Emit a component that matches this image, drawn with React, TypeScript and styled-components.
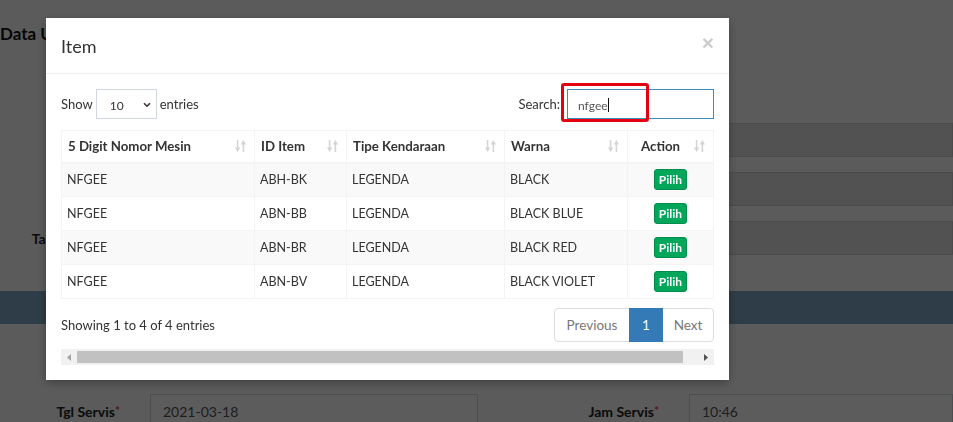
import React from "react";
import styled, { createGlobalStyle } from "styled-components";

const Global = createGlobalStyle`
  html, body { margin: 0; padding: 0; }
  body {
    font-family: Lato, "Open Sans", sans-serif;
    font-size: 13px;
    color: #333;
    overflow: hidden;
    background: #fcfcfc;
  }
  * { box-sizing: border-box; }
`;

/* ---------- background page ---------- */
const Page = styled.div`
  width: 953px;
  height: 422px;
  overflow: hidden;
  background: #fcfcfc;
  display: flex;
  flex-direction: column;
  & > * { flex-shrink: 0; }
`;

const PageTitle = styled.h1`
  margin: 24px 0 0 0;
  font-size: 17px;
  line-height: 20px;
  font-weight: 700;
  color: #111;
`;

const FormBlock = styled.div`
  margin-top: 79px;
  display: flex;
  flex-direction: column;
  gap: 15px;
`;

const FormRow = styled.div`
  display: grid;
  grid-template-columns: 150px 1fr;
  height: 34px;
  align-items: center;
`;

const FieldLabel = styled.label`
  text-align: right;
  padding-right: 30px;
  font-weight: 700;
  font-size: 14px;
  color: #222;
  white-space: nowrap;
`;

const Req = styled.span`
  color: #dd4b39;
  font-size: 12px;
  vertical-align: top;
`;

const FieldInput = styled.div<{ $light?: boolean }>`
  height: 34px;
  background: ${(p) => (p.$light ? "#ffffff" : "#e4e4e4")};
  border: 1px solid ${(p) => (p.$light ? "#d2d6de" : "#cfcfcf")};
  padding: 0 12px;
  display: flex;
  align-items: center;
  font-size: 14px;
  color: #555;
`;

const SectionBar = styled.div`
  margin-top: 36px;
  height: 33px;
  background: #80a9c5;
`;

const BottomRow = styled.div`
  margin-top: 70px;
  display: grid;
  grid-template-columns: 150px 328px 211px 1fr;
  height: 34px;
  align-items: center;
`;

/* ---------- modal ---------- */
const Backdrop = styled.div`
  position: fixed;
  inset: 0;
  background: rgba(0, 0, 0, 0.64);
`;

const Modal = styled.div`
  position: fixed;
  top: 18px;
  left: 46px;
  width: 683px;
  background: #fff;
  box-shadow: 0 3px 9px rgba(0, 0, 0, 0.3);
`;

const ModalHeader = styled.div`
  padding: 15px;
  border-bottom: 1px solid #eeeeee;
  display: flex;
  justify-content: space-between;
  align-items: center;
`;

const ModalTitle = styled.h4`
  margin: 0;
  padding-top: 1px;
  font-size: 18px;
  line-height: 24px;
  font-weight: 400;
  color: #333;
`;

const CloseBtn = styled.button`
  border: 0;
  background: transparent;
  padding: 0;
  margin-top: -6px;
  margin-right: 0;
  font-size: 21px;
  font-weight: 700;
  line-height: 1;
  color: #000;
  opacity: 0.2;
  font-family: "Liberation Sans", sans-serif;
`;

const ModalBody = styled.div`
  padding: 15px;
  display: flex;
  flex-direction: column;
`;

const ControlsRow = styled.div`
  display: flex;
  justify-content: space-between;
  align-items: center;
  height: 30px;
`;

const LengthCtl = styled.div`
  display: flex;
  align-items: center;
  gap: 3px;
  font-size: 13px;
`;

const FakeSelect = styled.div`
  width: 61px;
  height: 30px;
  border: 1px solid #d2d6de;
  display: flex;
  align-items: center;
  justify-content: space-between;
  padding: 2px 5px 0 13px;
  font-size: 12px;
  color: #333;
`;

const FilterCtl = styled.div`
  position: relative;
  display: flex;
  align-items: center;
  gap: 7px;
  font-size: 13px;
`;

const SearchBox = styled.div`
  width: 147px;
  height: 30px;
  border: 1px solid #3c8dbc;
  display: flex;
  align-items: center;
  padding: 2px 0 0 10px;
  font-size: 12px;
  color: #555;
`;

const Caret = styled.span`
  display: inline-block;
  width: 1px;
  height: 14px;
  background: #111;
`;

const Highlight = styled.div`
  position: absolute;
  right: 65px;
  top: -6px;
  width: 88px;
  height: 39px;
  border: 3px solid #e3000f;
  border-radius: 3px;
  pointer-events: none;
`;

const Table = styled.table`
  margin-top: 11px;
  width: 652px;
  border-collapse: collapse;
  table-layout: fixed;
`;

const Th = styled.th<{ $center?: boolean }>`
  position: relative;
  height: 32px;
  padding: 0 26px 0 6px;
  text-align: ${(p) => (p.$center ? "center" : "left")};
  font-weight: 700;
  font-size: 13.25px;
  color: #333;
  border: 1px solid #f4f4f4;
  border-bottom: 2px solid #f4f4f4;
  white-space: nowrap;
`;

const SortIcon = styled.svg`
  position: absolute;
  right: 8px;
  top: 50%;
  margin-top: -7px;
`;

const Tr = styled.tr<{ $odd?: boolean }>`
  background: ${(p) => (p.$odd ? "#f9f9f9" : "#fff")};
`;

const Td = styled.td<{ $center?: boolean }>`
  height: 34px;
  padding: 0 5px;
  border: 1px solid #f4f4f4;
  text-align: ${(p) => (p.$center ? "center" : "left")};
  font-size: 12.5px;
  color: #333;
  white-space: nowrap;
`;

const PilihBtn = styled.button`
  background: #00a65a;
  border: 1px solid #008d4c;
  border-radius: 3px;
  color: #fff;
  font-weight: 700;
  font-size: 12px;
  font-family: inherit;
  height: 21px;
  width: 33px;
  padding: 0;
  line-height: 19px;
  vertical-align: middle;
`;

const FooterRow = styled.div`
  margin-top: 9px;
  display: flex;
  justify-content: space-between;
  align-items: center;
  height: 34px;
`;

const Info = styled.div`
  font-size: 13px;
  color: #333;
`;

const Pager = styled.ul`
  list-style: none;
  margin: 0;
  padding: 0;
  display: flex;
`;

const PageLink = styled.li<{ $active?: boolean; $w: number; $pos?: "first" | "last" }>`
  height: 34px;
  width: ${(p) => p.$w}px;
  display: flex;
  align-items: center;
  justify-content: center;
  border: 1px solid ${(p) => (p.$active ? "#337ab7" : "#ddd")};
  background: ${(p) => (p.$active ? "#337ab7" : "#fff")};
  color: ${(p) => (p.$active ? "#fff" : "#777")};
  margin-left: ${(p) => (p.$pos === "first" ? "0" : "-1px")};
  border-radius: ${(p) =>
    p.$pos === "first" ? "4px 0 0 4px" : p.$pos === "last" ? "0 4px 4px 0" : "0"};
  font-size: 13.5px;
  position: relative;
  z-index: ${(p) => (p.$active ? 2 : 1)};
`;

const ScrollTrack = styled.div`
  margin-top: 7px;
  height: 16px;
  background: #f1f1f1;
  display: flex;
  align-items: center;
`;

const ScrollArrow = styled.div<{ $dark?: boolean }>`
  width: 16px;
  height: 16px;
  display: flex;
  align-items: center;
  justify-content: center;
  color: ${(p) => (p.$dark ? "#505050" : "#a3a3a3")};
`;

const ScrollThumb = styled.div`
  height: 12px;
  width: 606px;
  background: #c1c1c1;
`;

const ScrollSpacer = styled.div`
  flex: 1;
`;

const SortGlyph = () => (
  <SortIcon width="11" height="14" viewBox="0 0 11 14">
    <rect x="1.8" y="1" width="1.6" height="9" fill="#d4d4d4" />
    <polygon points="0,8.5 5.2,8.5 2.6,13" fill="#d4d4d4" />
    <rect x="7.6" y="4" width="1.6" height="9" fill="#d4d4d4" />
    <polygon points="5.8,5.5 11,5.5 8.4,1" fill="#d4d4d4" />
  </SortIcon>
);

const rows = [
  ["NFGEE", "ABH-BK", "LEGENDA", "BLACK"],
  ["NFGEE", "ABN-BB", "LEGENDA", "BLACK BLUE"],
  ["NFGEE", "ABN-BR", "LEGENDA", "BLACK RED"],
  ["NFGEE", "ABN-BV", "LEGENDA", "BLACK VIOLET"],
];

const cols = [193, 92, 158, 123, 86];

export default function App() {
  return (
    <>
      <Global />
      <Page>
        <PageTitle>Data U</PageTitle>
        <FormBlock>
          <FormRow>
            <FieldLabel />
            <FieldInput />
          </FormRow>
          <FormRow>
            <FieldLabel />
            <FieldInput />
          </FormRow>
          <FormRow>
            <FieldLabel>Tahun Rakitan</FieldLabel>
            <FieldInput />
          </FormRow>
        </FormBlock>
        <SectionBar />
        <BottomRow>
          <FieldLabel>
            Tgl Servis<Req>*</Req>
          </FieldLabel>
          <FieldInput $light>2021-03-18</FieldInput>
          <FieldLabel>
            Jam Servis<Req>*</Req>
          </FieldLabel>
          <FieldInput $light>10:46</FieldInput>
        </BottomRow>
      </Page>

      <Backdrop />
      <Modal>
        <ModalHeader>
          <ModalTitle>Item</ModalTitle>
          <CloseBtn>×</CloseBtn>
        </ModalHeader>
        <ModalBody>
          <ControlsRow>
            <LengthCtl>
              Show
              <FakeSelect>
                10
                <svg width="8" height="6" viewBox="0 0 8 6">
                  <path d="M1 1.2 L4 4.2 L7 1.2" fill="none" stroke="#333" strokeWidth="1.6" />
                </svg>
              </FakeSelect>
              entries
            </LengthCtl>
            <FilterCtl>
              Search:
              <SearchBox>
                nfgee
                <Caret />
              </SearchBox>
              <Highlight />
            </FilterCtl>
          </ControlsRow>

          <Table>
            <colgroup>
              {cols.map((w, i) => (
                <col key={i} style={{ width: w }} />
              ))}
            </colgroup>
            <thead>
              <tr>
                <Th>
                  5 Digit Nomor Mesin
                  <SortGlyph />
                </Th>
                <Th>
                  ID Item
                  <SortGlyph />
                </Th>
                <Th>
                  Tipe Kendaraan
                  <SortGlyph />
                </Th>
                <Th>
                  Warna
                  <SortGlyph />
                </Th>
                <Th $center>
                  Action
                  <SortGlyph />
                </Th>
              </tr>
            </thead>
            <tbody>
              {rows.map((r, i) => (
                <Tr key={i} $odd={i % 2 === 0}>
                  {r.map((c, j) => (
                    <Td key={j}>{c}</Td>
                  ))}
                  <Td $center>
                    <PilihBtn>Pilih</PilihBtn>
                  </Td>
                </Tr>
              ))}
            </tbody>
          </Table>

          <FooterRow>
            <Info>Showing 1 to 4 of 4 entries</Info>
            <Pager>
              <PageLink $w={76} $pos="first">Previous</PageLink>
              <PageLink $w={34} $active>1</PageLink>
              <PageLink $w={52} $pos="last">Next</PageLink>
            </Pager>
          </FooterRow>

          <ScrollTrack>
            <ScrollArrow>
              <svg width="4" height="7" viewBox="0 0 4 7">
                <polygon points="4,0 4,7 0,3.5" fill="currentColor" />
              </svg>
            </ScrollArrow>
            <ScrollThumb />
            <ScrollSpacer />
            <ScrollArrow $dark>
              <svg width="4" height="7" viewBox="0 0 4 7">
                <polygon points="0,0 0,7 4,3.5" fill="currentColor" />
              </svg>
            </ScrollArrow>
          </ScrollTrack>
        </ModalBody>
      </Modal>
    </>
  );
}
